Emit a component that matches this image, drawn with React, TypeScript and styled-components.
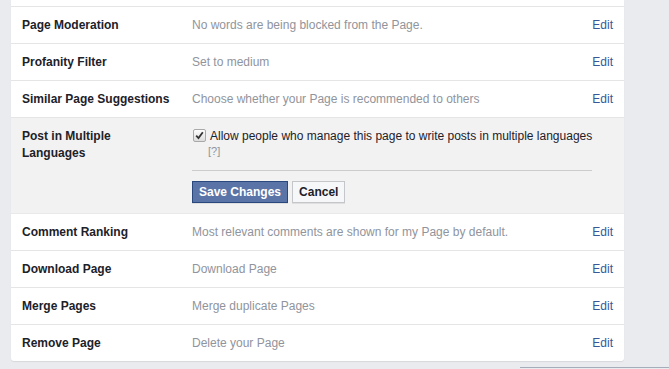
import React from "react";
import styled, { createGlobalStyle } from "styled-components";

const Global = createGlobalStyle`
  html, body {
    margin: 0;
    padding: 0;
    background: #e9ebee;
    font-family: "Liberation Sans", Arial, sans-serif;
    font-size: 12px;
  }
`;

const Page = styled.div`
  width: 669px;
  height: 369px;
  overflow: hidden;
  position: relative;
  padding-left: 11px;
  box-sizing: border-box;
`;

const Panel = styled.div`
  width: 613px;
  background: #fff;
  border-radius: 0 0 3px 3px;
  box-shadow: 0 1px 1px rgba(0, 0, 0, 0.08);
`;

const Stub = styled.div`
  height: 6px;
  border-bottom: 1px solid #e5e5e5;
`;

const Row = styled.div<{ $last?: boolean }>`
  display: grid;
  grid-template-columns: 170px 1fr auto;
  align-items: center;
  height: 36px;
  padding: 0 11px 0 11px;
  border-bottom: ${(p) => (p.$last ? "none" : "1px solid #e5e5e5")};
`;

const Label = styled.div`
  font-weight: bold;
  color: #1d2129;
  line-height: 17px;
`;

const Value = styled.div`
  color: #90949c;
`;

const EditLink = styled.a`
  color: #365899;
  font-size: 12px;
  cursor: pointer;
`;

const Expanded = styled.div`
  display: grid;
  grid-template-columns: 170px 400px;
  padding: 10px 11px 10px 11px;
  background: #f2f2f2;
  border-bottom: 1px solid #e9e9e9;
`;

const ExpandedLabel = styled(Label)`
  width: 110px;
`;

const Form = styled.div`
  display: flex;
  flex-direction: column;
`;

const CheckLine = styled.label`
  display: flex;
  align-items: flex-start;
  gap: 4px;
  color: #1d2129;
  line-height: 16px;
  white-space: nowrap;
`;

const Box = styled.span`
  width: 11px;
  height: 11px;
  margin-top: 1px;
  margin-left: 1px;
  border: 1px solid #a9a9a9;
  border-radius: 2px;
  background: linear-gradient(#fdfdfd, #dcdcdc);
  display: flex;
  align-items: center;
  justify-content: center;
  flex-shrink: 0;
`;

const Help = styled.div`
  color: #90949c;
  font-size: 11px;
  padding-left: 16px;
  line-height: 14px;
`;

const Divider = styled.div`
  border-top: 1px solid #cccccc;
  margin-top: 12px;
  margin-bottom: 10px;
`;

const Buttons = styled.div`
  display: flex;
  gap: 4px;
`;

const Button = styled.button<{ $primary?: boolean }>`
  height: 22px;
  box-sizing: border-box;
  padding: 0 6px;
  font-family: "Liberation Sans", Arial, sans-serif;
  font-size: 12px;
  font-weight: bold;
  border: 1px solid ${(p) => (p.$primary ? "#29487d" : "#c4c6ca")};
  background: ${(p) => (p.$primary ? "#5b74a8" : "#f6f7f9")};
  color: ${(p) => (p.$primary ? "#fff" : "#1d2129")};
  box-shadow: 0 1px 0 rgba(0, 0, 0, 0.08);
  cursor: pointer;
`;

const BottomLine = styled.div`
  position: absolute;
  left: 520px;
  right: 0;
  bottom: 1px;
  height: 1px;
  background: #a6adba;
`;

const rowsTop = [
  ["Page Moderation", "No words are being blocked from the Page."],
  ["Profanity Filter", "Set to medium"],
  ["Similar Page Suggestions", "Choose whether your Page is recommended to others"],
];

const rowsBottom = [
  ["Comment Ranking", "Most relevant comments are shown for my Page by default."],
  ["Download Page", "Download Page"],
  ["Merge Pages", "Merge duplicate Pages"],
  ["Remove Page", "Delete your Page"],
];

export default function App() {
  return (
    <Page>
      <Global />
      <Panel>
        <Stub />
        {rowsTop.map(([l, v]) => (
          <Row key={l}>
            <Label>{l}</Label>
            <Value>{v}</Value>
            <EditLink>Edit</EditLink>
          </Row>
        ))}
        <Expanded>
          <ExpandedLabel>Post in Multiple Languages</ExpandedLabel>
          <Form>
            <CheckLine>
              <Box>
                <svg width="9" height="9" viewBox="0 0 9 9">
                  <path d="M1.2 4.6 L3.5 7 L7.8 1.3" fill="none" stroke="#333" strokeWidth="1.8" />
                </svg>
              </Box>
              Allow people who manage this page to write posts in multiple languages
            </CheckLine>
            <Help>[?]</Help>
            <Divider />
            <Buttons>
              <Button $primary>Save Changes</Button>
              <Button>Cancel</Button>
            </Buttons>
          </Form>
        </Expanded>
        {rowsBottom.map(([l, v], i) => (
          <Row key={l} $last={i === rowsBottom.length - 1}>
            <Label>{l}</Label>
            <Value>{v}</Value>
            <EditLink>Edit</EditLink>
          </Row>
        ))}
      </Panel>
      <BottomLine />
    </Page>
  );
}
